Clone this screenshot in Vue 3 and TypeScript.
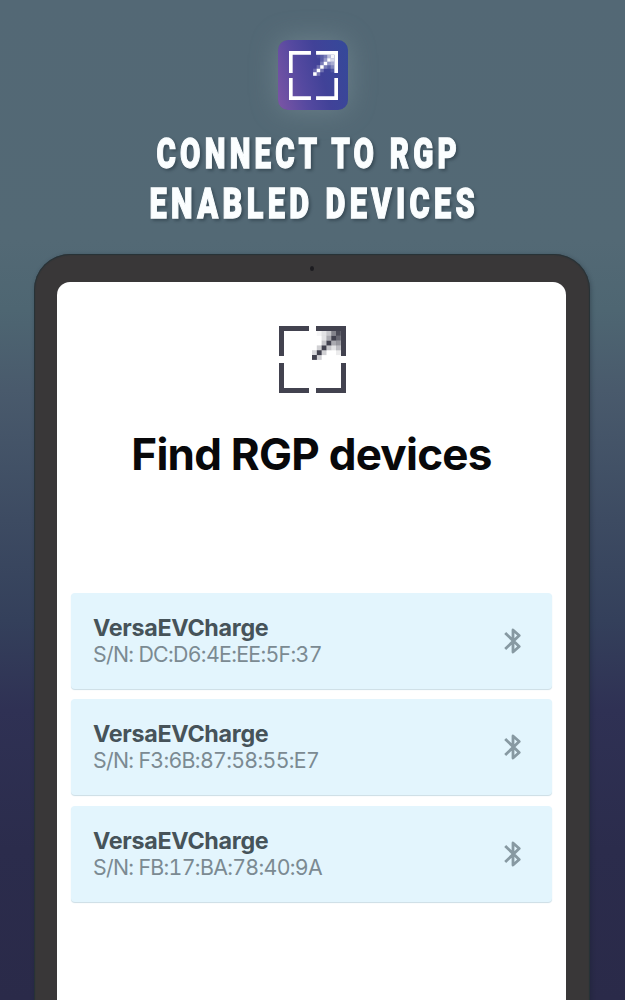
<script setup lang="ts">
interface Device { name: string; serial: string }

const devices: Device[] = [
  { name: 'VersaEVCharge', serial: 'DC:D6:4E:EE:5F:37' },
  { name: 'VersaEVCharge', serial: 'F3:6B:87:58:55:E7' },
  { name: 'VersaEVCharge', serial: 'FB:17:BA:78:40:9A' },
]

const frame = 'M0 0H30V5H5V30H0Z M37 0H67V30H62V5H37Z M0 37H5V62H30V67H0Z M62 37H67V67H37V62H62Z'

// Opacity of each arrow pixel, row by row
const shades: number[][] = [
  [0, 0.05, 0.15, 0.3, 0.65, 0.95],
  [0, 0, 0.15, 0.45, 1, 0.8],
  [0, 0, 0.3, 1, 0.45, 0.55],
  [0, 0.25, 1, 0.3, 0.15, 0.35],
  [0.2, 1, 0.25, 0, 0, 0.1],
  [1, 0.25, 0, 0, 0, 0],
]
const step = 4.8
const pixels = shades.flatMap((row, r) =>
  row.map((o, c) => ({ x: 33 + c * step, y: 5 + r * step, o })).filter((p) => p.o > 0),
)
</script>

<template>
  <main class="page">
    <div class="app-icon">
      <svg class="app-mark" viewBox="0 0 67 67">
        <path :d="frame" />
        <rect v-for="(p, i) in pixels" :key="i" :x="p.x" :y="p.y" width="4.9" height="4.9" :opacity="p.o" />
      </svg>
    </div>
    <svg class="headline" viewBox="0 0 625 110">
      <g transform="translate(156.5 43.7) scale(0.7 1)">
        <text textLength="435" lengthAdjust="spacingAndGlyphs">CONNECT TO RGP</text>
      </g>
      <g transform="translate(149.5 93.7) scale(0.7 1)">
        <text textLength="471" lengthAdjust="spacingAndGlyphs">ENABLED DEVICES</text>
      </g>
    </svg>
    <section class="tablet">
      <i class="camera"></i>
      <div class="screen">
        <svg class="logo" viewBox="0 0 67 67">
          <path :d="frame" />
          <rect v-for="(p, i) in pixels" :key="i" :x="p.x" :y="p.y" width="4.9" height="4.9" :opacity="p.o" />
        </svg>
        <h1>Find RGP devices</h1>
        <div class="list">
          <article v-for="d in devices" :key="d.serial" class="card">
            <div>
              <div class="name">{{ d.name }}</div>
              <div class="serial">S/N: {{ d.serial }}</div>
            </div>
            <svg class="bt" viewBox="0 0 18 28">
              <path d="M1.2 6L15.2 19.5L9 25V3L15.2 8.5L1.2 22" />
            </svg>
          </article>
        </div>
      </div>
    </section>
  </main>
</template>

<style>
body { margin: 0; overflow: hidden; }
</style>

<style scoped>
.page {
  width: 625px;
  height: 1000px;
  box-sizing: border-box;
  padding-top: 40px;
  overflow: hidden;
  display: flex;
  flex-direction: column;
  align-items: center;
  background: linear-gradient(180deg, #536875 0, #536975 240px, #4e6672 310px, #495a6c 390px, #3d4b62 520px, #34405b 620px, #2f3154 710px, #2b2c4c 850px, #2a2a49 1000px);
  font-family: Inter, "Liberation Sans", sans-serif;
}
.app-icon {
  width: 70px;
  height: 70px;
  flex: none;
  border-radius: 10px;
  display: flex;
  align-items: center;
  justify-content: center;
  background: linear-gradient(75deg, #7c55a5 0%, #5549a0 35%, #414298 60%, #34499a 100%);
  box-shadow: 0 0 28px rgba(150, 170, 175, 0.38);
}
.app-mark { width: 49px; height: 49px; fill: #fff; margin-left: 1px; }
.headline {
  width: 625px;
  height: 110px;
  margin-top: 14px;
  flex: none;
  fill: #fbfeff;
  stroke: #fbfeff;
  stroke-width: 1.3;
  font: 900 42.5px Roboto, sans-serif;
  letter-spacing: 6px;
  filter: drop-shadow(2px 2px 1.5px rgba(20, 35, 45, 0.4));
}
.tablet {
  position: relative;
  box-sizing: border-box;
  width: 556px;
  height: 800px;
  flex: none;
  margin: 20px 1px 0 0;
  padding: 28px 24px 0 23px;
  border-radius: 36px 36px 0 0;
  background: #393738;
  box-shadow: inset 0 0 1px 1px #263237, 1px 1px 4px rgba(20, 30, 40, 0.35);
}
.camera {
  position: absolute;
  left: 276px;
  top: 12px;
  width: 4px;
  height: 5px;
  border-radius: 50%;
  background: #1d1c20;
}
.screen {
  height: 772px;
  box-sizing: border-box;
  padding: 44px 14px 0;
  background: #fff;
  border-radius: 13px 13px 0 0;
  display: flex;
  flex-direction: column;
  align-items: center;
}
.logo { width: 67px; height: 67px; fill: #42424f; margin-left: 2px; }
h1 {
  margin: 33px 0 0;
  height: 56px;
  line-height: 56px;
  font-size: 44px;
  font-weight: 700;
  letter-spacing: -0.75px;
  color: #08080a;
  white-space: nowrap;
}
.list {
  width: 100%;
  margin-top: 111px;
  display: flex;
  flex-direction: column;
  gap: 10.4px;
}
.card {
  height: 96px;
  box-sizing: border-box;
  padding: 0 30px 0 22px;
  border-radius: 4px;
  background: #e3f5fd;
  box-shadow: 0 1px 1px #cbdde5;
  display: flex;
  align-items: center;
  justify-content: space-between;
}
.name {
  font-size: 23.3px;
  line-height: 27px;
  font-weight: 700;
  letter-spacing: -0.3px;
  color: #465359;
}
.serial {
  font-size: 21.3px;
  line-height: 26px;
  letter-spacing: -0.68px;
  font-variant-numeric: tabular-nums;
  color: #7b8a92;
  margin-bottom: 1px;
}
.bt {
  width: 18px;
  height: 28px;
  fill: none;
  stroke: #8799a2;
  stroke-width: 2.8;
  stroke-linejoin: round;
}
</style>
